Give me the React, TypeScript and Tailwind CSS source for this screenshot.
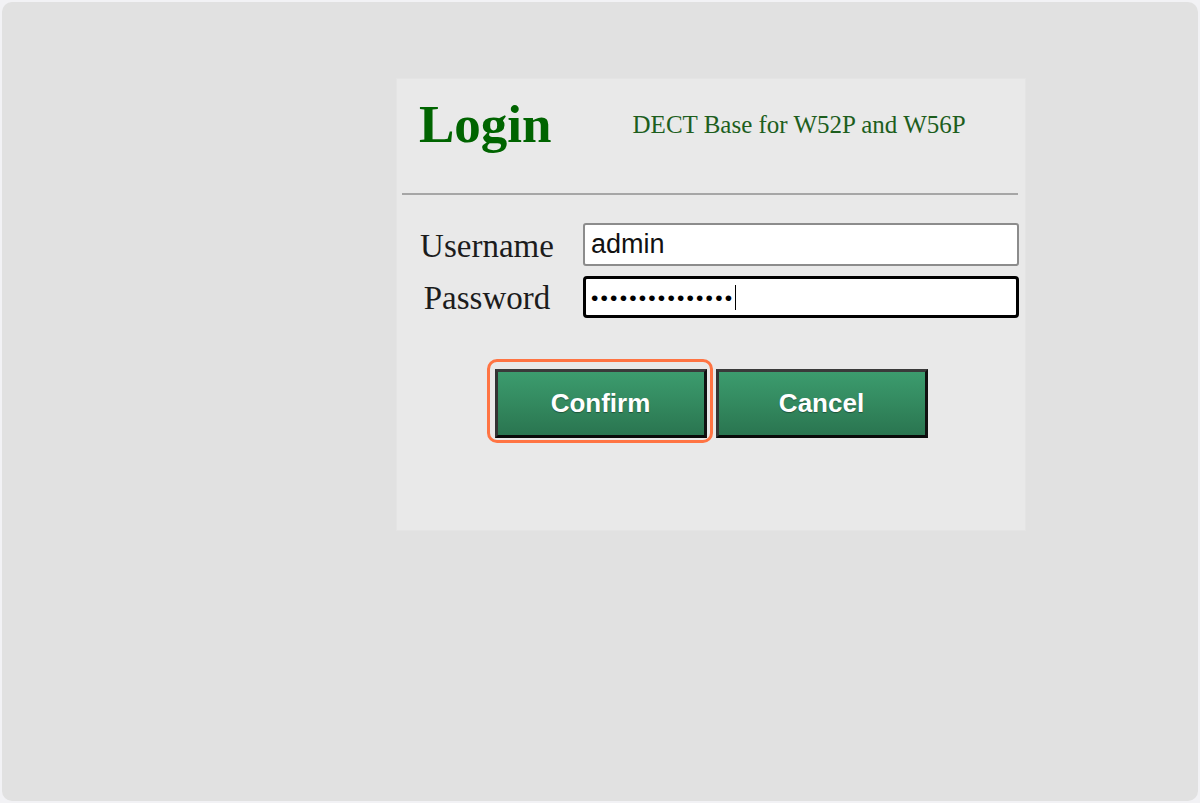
const serif = { fontFamily: '"Liberation Serif", "Times New Roman", serif' };
const sans = { fontFamily: '"Liberation Sans", Arial, sans-serif' };

function GreenButton({ label }: { label: string }) {
  return (
    <button
      type="button"
      className="h-[69px] w-[212px] border-[3px] border-t-[#3a3a3a] border-l-[#333] border-r-[#111] border-b-[#0a0a0a] bg-gradient-to-b from-[#3c9c6e] via-[#33895f] to-[#2a7550] text-[26px] font-bold text-white [text-shadow:0_1px_1px_rgba(0,0,0,0.35)]"
      style={sans}
    >
      {label}
    </button>
  );
}

export default function App() {
  return (
    <div className="min-h-[803px] bg-[#f2f2f5] p-[2px]">
      <div className="h-[799px] rounded-[10px] bg-[#e1e1e1] pt-[76px] pl-[394px]">
        <div className="flex h-[453px] w-[630px] flex-col border border-[#e4e4e4] bg-[#e9e9e9]">
          {/* header */}
          <div className="flex items-center pt-[19px] pl-[22px]">
            <h1 className="text-[53px] font-bold leading-none text-[#006400]" style={serif}>
              Login
            </h1>
            <p className="ml-[81px] text-[25px] leading-none text-[#1d5e1d]" style={serif}>
              DECT Base for W52P and W56P
            </p>
          </div>

          <div className="mt-[42px] ml-[5px] mr-[7px] h-[2px] bg-[#a6a6a6]" />

          {/* form */}
          <div className="mt-[28px] flex flex-col gap-[10px] pl-[5px]">
            <div className="flex items-center">
              <label className="w-[170px] pt-[3px] text-center text-[33px] leading-none text-[#1c1c1c]" style={serif}>
                Username
              </label>
              <div
                className="ml-[11px] flex h-[43px] w-[436px] items-center rounded-[3px] border-2 border-[#8c8c8c] bg-white px-[6px] text-[27px] leading-none text-[#111]"
                style={sans}
              >
                admin
              </div>
            </div>
            <div className="flex items-center">
              <label className="w-[170px] pt-[3px] text-center text-[33px] leading-none text-[#1c1c1c]" style={serif}>
                Password
              </label>
              <div
                className="ml-[11px] flex h-[42px] w-[436px] items-center rounded-[4px] border-[3px] border-black bg-white px-[5px] leading-none text-black"
                style={sans}
              >
                <span className="text-[21px] tracking-[2.2px]">•••••••••••••••</span>
                <span className="ml-[1px] h-[25px] w-[1px] bg-black" />
              </div>
            </div>
          </div>

          {/* actions */}
          <div className="mt-[51px] flex justify-center gap-[9px]">
            <div className="relative">
              <GreenButton label="Confirm" />
              <div className="pointer-events-none absolute top-[-10px] right-[-6px] bottom-[-5px] left-[-8px] rounded-[10px] border-[3px] border-[#ff7443]" />
            </div>
            <GreenButton label="Cancel" />
          </div>
        </div>
      </div>
    </div>
  );
}
